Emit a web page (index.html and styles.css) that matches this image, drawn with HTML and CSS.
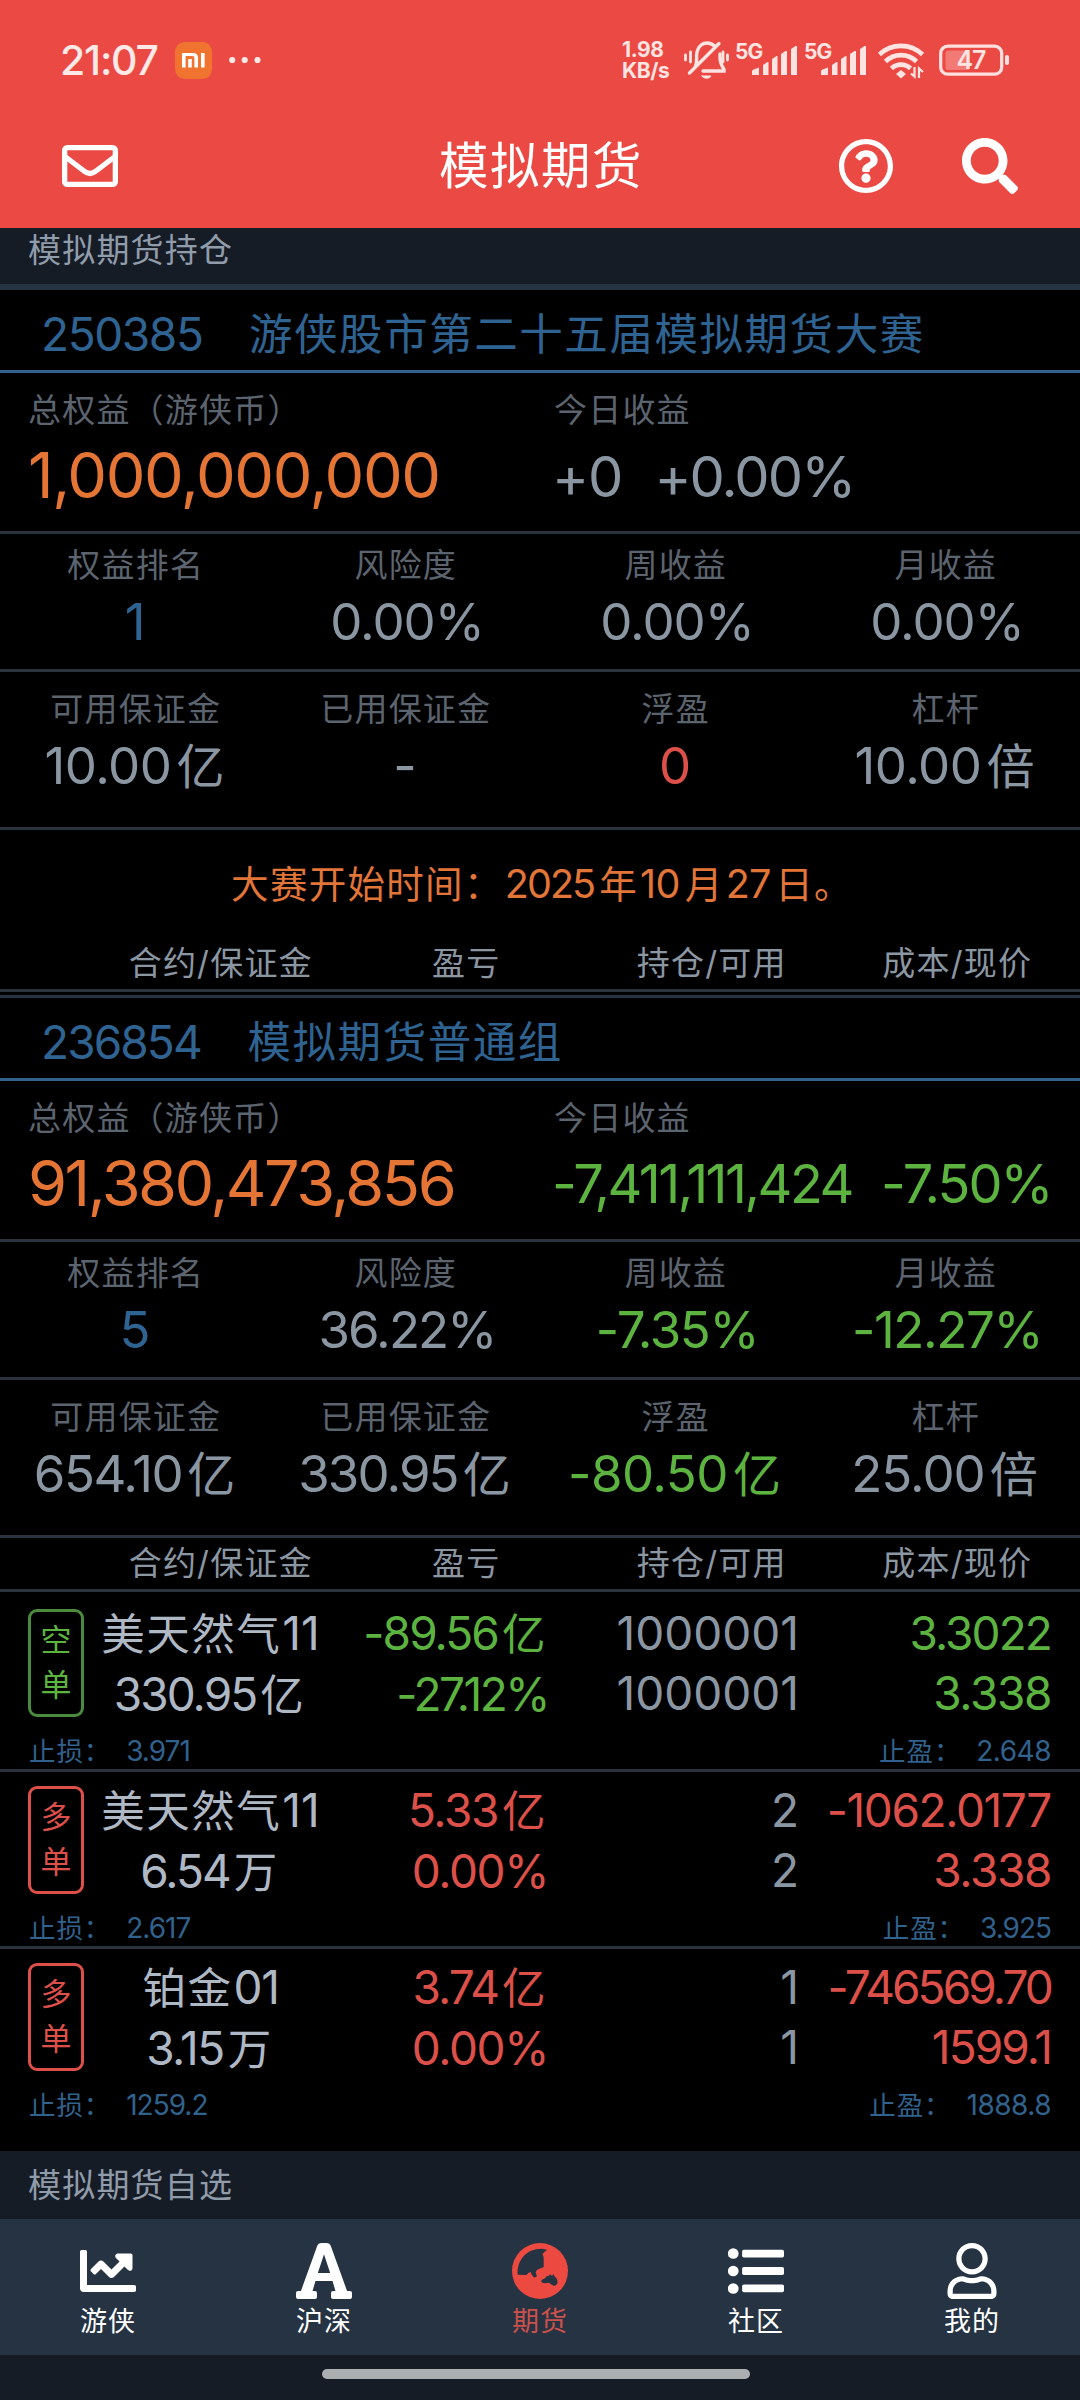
FILE: index.html
```html
<!DOCTYPE html>
<html lang="zh-CN">
<head>
<meta charset="utf-8">
<title>模拟期货</title>
<link rel="stylesheet" href="styles.css">
</head>
<body>
<header class="top">
  <div class="status">
    <span class="clock">21:07</span>
    <svg class="mi" viewBox="0 0 37 37"><rect width="37" height="37" rx="9.5" fill="#f0742f"/><path d="M7 25.500V11h11.500a4.500 4.500 0 0 1 4.500 4.500v10h-3.600v-9.500a2 2 0 0 0-2-2H10.600v11.500z" fill="#fff"/><path d="M13.200 17h3.600v8.500h-3.600zM26 11h3.600v14.500H26z" fill="#fff"/></svg>
    <svg class="more" viewBox="0 0 32 8" fill="#ffe9e7"><circle cx="3.200" cy="4" r="3.100"/><circle cx="15.700" cy="4" r="3.100"/><circle cx="28.500" cy="4" r="3.100"/></svg>
    <div class="status-right">
      <div class="speed"><div>1.98</div><div>KB/s</div></div>
      <svg class="bell" viewBox="0 0 48 40" fill="none" stroke="#ffe4e2" stroke-width="3.400" stroke-linecap="round"><path d="M13.500 26c2-4 .5-9 1.500-14C16.500 5.500 21 3 25 3c3 0 5.500 1 7.500 3M38 14c0 6 0 9 4 15.500V31H21M7.500 33L37 3.500"/><path d="M20 36h9c-1 3-8 3-9 0z" fill="#ffe4e2" stroke-width="1"/><path d="M3.500 15v5M8.500 12v10M41 12v10M45.500 15v5" stroke-width="2.800"/></svg>
      <svg class="signal" viewBox="0 0 66 40" fill="#ffe4e2"><text x="2" y="18.500" class="net">5G</text><path d="M19 35v-3.500q0-1.500 1.500-2l5.500-2v7.500zM30 35V25l4.500-3h1v13zM39 35V19l4.500-3h1v19zM48 35V14l4.500-3h1.500v24zM58 35V9l4.500-3H64v29z"/></svg>
      <svg class="signal" viewBox="0 0 66 40" fill="#ffe4e2"><text x="2" y="18.500" class="net">5G</text><path d="M19 35v-3.500q0-1.500 1.500-2l5.500-2v7.500zM30 35V25l4.500-3h1v13zM39 35V19l4.500-3h1v19zM48 35V14l4.500-3h1.500v24zM58 35V9l4.500-3H64v29z"/></svg>
      <svg class="wifi" viewBox="0 0 48 40" fill="none" stroke="#ffe4e2" stroke-width="4.600"><path d="M2.500 14.500a31 31 0 0 1 43 0M8.500 21.500a22 22 0 0 1 31 0M14.500 28.500a13.500 13.500 0 0 1 19 0"/><path d="M19 34l5-4 5 4-5 4.500z" fill="#ffe4e2" stroke="none"/><path d="M37.500 27v9.500l-3.500-3M42 38v-9.500l4 3.500" stroke-width="2.200"/></svg>
      <svg class="battery" viewBox="0 0 74 34"><rect x="3.700" y="3.200" width="61" height="28" rx="7" fill="none" stroke="#ffe0de" stroke-width="3.200"/><rect x="8.500" y="7.500" width="24" height="19.500" rx="3" fill="#f37a74"/><rect x="68" y="12" width="4" height="10" rx="2" fill="#ffe0de"/><text x="34" y="26" text-anchor="middle" class="level">47</text></svg>
    </div>
  </div>
  <nav class="bar">
    <svg class="mail" viewBox="0 0 56 42" fill="none" stroke="#fff" stroke-width="5.300"><rect x="2.650" y="2.650" width="50.700" height="36.700" rx="2.600"/><path d="M3 11.500l19 14.500q6 5 12 0l19-14.500"/></svg>
    <h1>模拟期货</h1>
    <div class="actions">
      <svg class="help" viewBox="8 8 496 496" fill="#fff"><path d="M256 8C119.043 8 8 119.083 8 256c0 136.997 111.043 248 248 248s248-111.003 248-248C504 119.083 392.957 8 256 8zm0 448c-110.532 0-200-89.431-200-200 0-110.495 89.472-200 200-200 110.491 0 200 89.471 200 200 0 110.530-89.431 200-200 200zm107.244-255.200c0 67.052-72.421 68.084-72.421 92.863V300c0 6.627-5.373 12-12 12h-45.647c-6.627 0-12-5.373-12-12v-8.659c0-35.745 27.100-50.034 47.579-61.516 17.561-9.845 28.324-16.541 28.324-29.579 0-17.246-21.999-28.693-39.784-28.693-23.189 0-33.894 10.977-48.942 29.969-4.057 5.120-11.460 6.071-16.666 2.124l-27.824-21.098c-5.107-3.872-6.251-11.066-2.644-16.363C184.846 131.491 214.940 112 261.794 112c49.071 0 101.450 38.304 101.450 88.800zM298 368c0 23.159-18.841 42-42 42s-42-18.841-42-42 18.841-42 42-42 42 18.841 42 42z"/></svg>
      <svg class="search" viewBox="0 0 512 512" fill="#fff"><path d="M505 442.700L405.300 343c-4.500-4.500-10.600-7-17-7H372c27.600-35.300 44-79.700 44-128C416 93.100 322.900 0 208 0S0 93.100 0 208s93.100 208 208 208c48.300 0 92.700-16.400 128-44v16.300c0 6.400 2.500 12.500 7 17l99.700 99.700c9.400 9.400 24.600 9.400 33.900 0l28.300-28.300c9.400-9.400 9.400-24.600.1-34zM208 336c-70.700 0-128-57.200-128-128 0-70.700 57.200-128 128-128 70.700 0 128 57.200 128 128 0 70.700-57.200 128-128 128z"/></svg>
    </div>
  </nav>
</header>

<main>
  <h2 class="band band-first">模拟期货持仓</h2>

  <section class="account">
    <h3 class="account-title"><span class="t3">250385</span><span>游侠股市第二十五届模拟期货大赛</span></h3>
    <div class="summary">
      <div class="total"><div class="label">总权益（游侠币）</div><div class="equity t3">1,000,000,000</div></div>
      <div><div class="label">今日收益</div><div class="today even"><span class="t2">+0</span><span class="t4">+0.00%</span></div></div>
    </div>
    <div class="stats rank">
      <div><div class="label">权益排名</div><div class="value blue">1</div></div>
      <div><div class="label">风险度</div><div class="value pct t2">0.00%</div></div>
      <div><div class="label">周收益</div><div class="value pct t2">0.00%</div></div>
      <div><div class="label">月收益</div><div class="value pct t2">0.00%</div></div>
    </div>
    <div class="stats margin">
      <div><div class="label">可用保证金</div><div class="value t1">10.00<i>亿</i></div></div>
      <div><div class="label">已用保证金</div><div class="value">-</div></div>
      <div><div class="label">浮盈</div><div class="value red">0</div></div>
      <div><div class="label">杠杆</div><div class="value t1">10.00<i>倍</i></div></div>
    </div>
    <p class="notice">大赛开始时间：<span class="t4">2025</span>年<span class="t1">10</span>月<span class="t2">27</span>日。</p>
    <div class="thead"><span>合约/保证金</span><span>盈亏</span><span>持仓/可用</span><span>成本/现价</span></div>
  </section>

  <section class="account account-next">
    <h3 class="account-title"><span class="t4">236854</span><span>模拟期货普通组</span></h3>
    <div class="summary">
      <div class="total"><div class="label">总权益（游侠币）</div><div class="equity t5">91,380,473,856</div></div>
      <div><div class="label">今日收益</div><div class="today green"><span class="t5">-7,411,111,424</span><span class="t4">-7.50%</span></div></div>
    </div>
    <div class="stats rank">
      <div><div class="label">权益排名</div><div class="value blue">5</div></div>
      <div><div class="label">风险度</div><div class="value pct t4">36.22%</div></div>
      <div><div class="label">周收益</div><div class="value pct green t3">-7.35%</div></div>
      <div><div class="label">月收益</div><div class="value pct green t3">-12.27%</div></div>
    </div>
    <div class="stats margin">
      <div><div class="label">可用保证金</div><div class="value t3">654.10<i>亿</i></div></div>
      <div><div class="label">已用保证金</div><div class="value t4">330.95<i>亿</i></div></div>
      <div><div class="label">浮盈</div><div class="value green t1">-80.50<i>亿</i></div></div>
      <div><div class="label">杠杆</div><div class="value t2">25.00<i>倍</i></div></div>
    </div>
    <div class="thead"><span>合约/保证金</span><span>盈亏</span><span>持仓/可用</span><span>成本/现价</span></div>

    <div class="positions">
      <article class="position">
        <div class="tag green">空<br>单</div>
        <div class="cell name"><div><i class="lead">美天然气</i>11</div><div class="t4">330.95<i>亿</i></div></div>
        <div class="cell green"><div class="t4">-89.56<i>亿</i></div><div class="t5">-27.12%</div></div>
        <div class="cell"><div>1000001</div><div>1000001</div></div>
        <div class="cell green"><div class="t4">3.3022</div><div class="t3">3.338</div></div>
        <div class="stops"><span>止损：<b class="t2">3.971</b></span><span>止盈：<b class="t1">2.648</b></span></div>
      </article>
      <article class="position">
        <div class="tag red">多<br>单</div>
        <div class="cell name"><div><i class="lead">美天然气</i>11</div><div class="t4">6.54<i>万</i></div></div>
        <div class="cell red"><div class="t3">5.33<i>亿</i></div><div class="t3">0.00%</div></div>
        <div class="cell"><div>2</div><div>2</div></div>
        <div class="cell red"><div class="t3">-1062.0177</div><div class="t3">3.338</div></div>
        <div class="stops"><span>止损：<b class="t2">2.617</b></span><span>止盈：<b class="t2">3.925</b></span></div>
      </article>
      <article class="position">
        <div class="tag red">多<br>单</div>
        <div class="cell name"><div class="t3"><i class="lead">铂金</i>01</div><div class="t3">3.15<i>万</i></div></div>
        <div class="cell red"><div class="t4">3.74<i>亿</i></div><div class="t3">0.00%</div></div>
        <div class="cell"><div>1</div><div>1</div></div>
        <div class="cell red"><div class="t6">-746569.70</div><div class="t4">1599.1</div></div>
        <div class="stops"><span>止损：<b class="t2">1259.2</b></span><span>止盈：<b class="t1">1888.8</b></span></div>
      </article>
    </div>
  </section>

  <h2 class="band band-last">模拟期货自选</h2>
</main>

<footer>
  <nav class="tabs">
    <a><svg viewBox="0 0 512 512" fill="#fff"><path d="M496 384H64V80c0-8.840-7.160-16-16-16H16C7.160 64 0 71.160 0 80v336c0 17.670 14.330 32 32 32h464c8.840 0 16-7.160 16-16v-32c0-8.840-7.160-16-16-16zM464 96H345.940c-21.380 0-32.090 25.850-16.970 40.970l32.400 32.400L288 242.750l-73.370-73.370c-12.500-12.500-32.760-12.500-45.250 0l-68.690 68.690c-6.250 6.250-6.250 16.380 0 22.630l22.620 22.620c6.250 6.250 16.380 6.250 22.630 0L192 237.250l73.370 73.370c12.500 12.500 32.760 12.500 45.250 0l96-96 32.400 32.400c15.120 15.120 40.970 4.410 40.970-16.970V112c.01-8.840-7.150-16-15.990-16z"/></svg>游侠</a>
    <a><svg viewBox="0 32 448 448" fill="#fff"><path d="M432 416h-23.410L277.880 53.690A32 32 0 0 0 247.580 32h-47.160a32 32 0 0 0-30.300 21.690L39.410 416H16a16 16 0 0 0-16 16v32a16 16 0 0 0 16 16h136a16 16 0 0 0 16-16v-32a16 16 0 0 0-16-16h-19.580l23.300-80h136.560l23.300 80H296a16 16 0 0 0-16 16v32a16 16 0 0 0 16 16h136a16 16 0 0 0 16-16v-32a16 16 0 0 0-16-16zM174.850 272L224 122.510 273.150 272z"/></svg>沪深</a>
    <a class="active"><svg viewBox="36 39 168 168"><circle cx="120" cy="123" r="84" fill="#ec4a41"/><path d="M53 134C50 90 80 55 126 56l15 3-14 13 4 8v32l-10 3-11 6-3 7 4 11-8 4-7-7-4-10-6 2-7 7z" fill="#263343"/><path d="M123 154l3-5 9-4 6-7h4l6-5 3 4 4-1 2-5 3 7 8 9 2 12-5 7-7 1-8-4-6-5-13 2-7-2z" fill="#263343"/></svg>期货</a>
    <a><svg viewBox="0 0 512 512" fill="#fff"><circle cx="48" cy="96" r="49"/><circle cx="48" cy="256" r="49"/><circle cx="48" cy="416" r="49"/><rect x="129" y="61" width="383" height="72" rx="16"/><rect x="129" y="220" width="383" height="72" rx="16"/><rect x="129" y="379" width="383" height="72" rx="16"/></svg>社区</a>
    <a><svg viewBox="-32 0 512 512" fill="#fff"><path d="M313.600 304c-28.700 0-42.500 16-89.600 16-47.100 0-60.800-16-89.600-16C60.200 304 0 364.200 0 438.400V464c0 26.500 21.500 48 48 48h352c26.500 0 48-21.500 48-48v-25.600c0-74.200-60.200-134.400-134.400-134.400zM400 464H48v-25.600c0-47.600 38.800-86.400 86.400-86.400 14.600 0 38.300 16 89.600 16 51.700 0 74.900-16 89.600-16 47.600 0 86.400 38.800 86.400 86.400V464zM224 288c79.500 0 144-64.500 144-144S303.500 0 224 0 80 64.500 80 144s64.500 144 144 144zm0-240c52.900 0 96 43.100 96 96s-43.100 96-96 96-96-43.100-96-96 43.100-96 96-96z"/></svg>我的</a>
  </nav>
  <div class="gesture"><span></span></div>
</footer>
</body>
</html>
```
FILE: styles.css
```css
* { box-sizing: border-box; margin: 0; padding: 0; }

body {
  width: 1080px;
  height: 2400px;
  overflow: hidden;
  background: #000;
  color: #8b96a3;
  font-family: Inter, "Noto Sans CJK SC", sans-serif;
  display: flex;
  flex-direction: column;
}

i, b, h1, h2, h3 { font-style: normal; font-weight: 400; }
svg { display: block; flex: none; }

/* digit tracking steps */
.t1 { letter-spacing: -0.5px; }
.t2 { letter-spacing: -1px; }
.t3 { letter-spacing: -1.4px; }
.t4 { letter-spacing: -1.9px; }
.t5 { letter-spacing: -2.5px; }
.t6 { letter-spacing: -2.9px; }

.green { color: #5cb340; }
.red { color: #dc5049; }
.blue { color: #2f6391; }

/* header */
.top { height: 228px; background: #eb4943; color: #fff; flex: none; }
.status { height: 120px; display: flex; align-items: center; padding: 0 69px 0 60px; }
.clock { width: 115px; font-size: 41px; font-weight: 500; letter-spacing: -1.2px; color: #ffe9e7; }
.mi { width: 37px; height: 37px; }
.more { width: 32px; height: 8px; margin-left: 17px; }
.status-right { margin-left: auto; display: flex; align-items: center; }
.speed { width: 60px; font-size: 21px; font-weight: 700; letter-spacing: -0.4px; color: #ffe4e2; }
.speed div { height: 21px; line-height: 21px; }
.bell { width: 48px; height: 40px; }
.signal { width: 66px; height: 40px; margin-left: 3px; }
.net { font-size: 21px; font-weight: 700; letter-spacing: -0.8px; }
.wifi { width: 48px; height: 40px; margin-left: 9px; }
.battery { width: 74px; height: 34px; margin-left: 12px; }
.level { font-size: 25px; font-weight: 600; fill: #ffe4e2; letter-spacing: -1px; }

.bar { height: 92px; display: grid; grid-template-columns: 1fr auto 1fr; align-items: center; padding: 0 62px; }
.bar h1 { padding-left: 2px; font-size: 49.5px; line-height: 90px; letter-spacing: 1.5px; }
.mail { width: 56px; height: 42px; }
.actions { display: flex; align-items: center; justify-content: flex-end; gap: 69px; }
.help { width: 54px; height: 54px; }
.search { width: 56px; height: 56px; }

/* section bands */
.band { background: #161c26; color: #919cab; font-size: 33px; letter-spacing: 1.2px; padding-left: 28px; }
.band-first { height: 56px; line-height: 45px; }
.band-last { height: 68px; line-height: 69px; }

/* account */
.account { border-top: 6px solid #263341; }
.account-next { border-top-width: 3px; margin-top: 3px; }
.account-title {
  height: 83px;
  padding: 7px 0 0 41px;
  border-bottom: 3px solid #33628c;
  font-size: 46px;
  line-height: 74px;
  color: #2f6391;
  display: flex;
}
.account-title span:first-child { width: 208px; }
.account-next .account-title span:first-child { width: 206.5px; }
.account-title span:last-child { font-size: 43.5px; letter-spacing: 1.55px; }

.label { font-size: 33px; line-height: 44px; letter-spacing: 1.2px; color: #5c646f; }

.summary { height: 161px; display: flex; padding: 15px 0 0 28px; border-bottom: 3px solid #2a333e; }
.total { width: 526px; }
.equity { font-size: 63px; line-height: 86px; color: #e47535; }
.today { display: flex; gap: 29px; margin-left: -2px; font-size: 54px; line-height: 88px; white-space: nowrap; }
.even { font-size: 56px; line-height: 90px; gap: 32px; }

.stats { display: grid; grid-template-columns: repeat(4, 270px); text-align: center; border-bottom: 3px solid #2a333e; }
.stats .label { padding-left: 1.5px; }
.rank { height: 138px; padding-top: 9px; }
.margin { height: 158px; padding-top: 15px; }
.value { font-size: 51px; line-height: 70px; white-space: nowrap; }
.value i { font-size: 48px; margin: 0 1px 0 5px; letter-spacing: 0; }
.pct { padding-left: 4px; }

.notice { height: 108px; padding-left: 4px; line-height: 109px; text-align: center; font-size: 37.5px; letter-spacing: 1.3px; color: #e27538; }
.notice span { font-size: 39.5px; margin: 0 5px 0 2px; }

.thead {
  display: grid;
  grid-template-columns: repeat(4, 245.5px);
  height: 54px;
  padding-left: 98px;
  border-bottom: 3px solid #2a333e;
  font-size: 33px;
  line-height: 50px;
  letter-spacing: 1.2px;
  text-align: center;
}

/* positions */
.positions { padding: 3px 0 28px; }
.position {
  display: grid;
  grid-template-columns: 56px 252px 212px 251px 252px;
  grid-template-rows: 120px 36px;
  row-gap: 10px;
  height: 177px;
  padding: 8px 28px 0;
  border-bottom: 3px solid #2a333e;
}
.position:last-child { height: 174px; border-bottom: 0; }
.tag {
  height: 108px;
  margin-top: 6px;
  padding-top: 5px;
  border: 3px solid currentColor;
  border-radius: 9px;
  font-size: 31px;
  line-height: 45px;
  text-align: center;
}
.tag.green { border-color: #4b8b3d; }
.cell { font-size: 46px; line-height: 60px; text-align: right; white-space: nowrap; }
.cell i { font-size: 43.5px; letter-spacing: 1.5px; margin: 0 1px 0 4px; }
.name { text-align: center; color: #afb8c5; }
.name .lead { margin: 0 1px 0 1px; }
.stops {
  grid-column: 1 / -1;
  display: flex;
  justify-content: space-between;
  padding-left: 1px;
  font-size: 26.5px;
  line-height: 36px;
  letter-spacing: 0.9px;
  color: #31628d;
}
.stops b { font-size: 28px; margin-left: 15px; }

/* bottom navigation */
.tabs { display: grid; grid-template-columns: repeat(5, 216px); height: 136px; background: #263343; }
.tabs a { padding-top: 24px; text-align: center; color: #fff; font-size: 27px; line-height: 46px; letter-spacing: 1px; text-indent: 2px; }
.tabs svg { width: 56px; height: 56px; margin: 0 auto; }
.tabs .active { color: #cb514b; }
.gesture { height: 45px; padding: 14px 0 0 322px; background: #161c26; }
.gesture span { display: block; width: 428px; height: 10px; border-radius: 5px; background: #abafb2; }
```
